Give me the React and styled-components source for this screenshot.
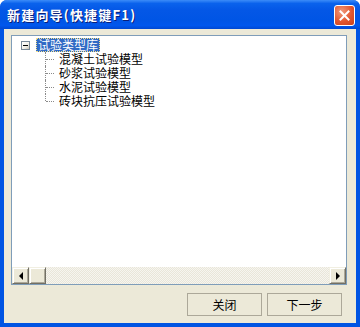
import React from 'react';
import styled, { createGlobalStyle, css } from 'styled-components';

const GlobalStyle = createGlobalStyle`
    html, body {
        margin: 0;
        padding: 0;
        background: #ffffff;
    }
    body {
        font-family: "Noto Sans CJK SC", "Liberation Sans", sans-serif;
        font-size: 12px;
    }
`;

const Window = styled.div`
    width: 360px;
    height: 327px;
    display: flex;
    flex-direction: column;
    box-sizing: border-box;
    overflow: hidden;
    border-radius: 7px 7px 0 0;
    background: #0054e3;
`;

const TitleBar = styled.div`
    height: 29px;
    flex: none;
    display: flex;
    align-items: center;
    justify-content: space-between;
    padding: 0 5px 0 7px;
    box-sizing: border-box;
    background: linear-gradient(
        to bottom,
        #3c8cf8 0%,
        #0a62ec 12%,
        #0457e6 35%,
        #0055e5 70%,
        #0057ed 88%,
        #0048d2 100%
    );
`;

const Title = styled.span`
    color: #ffffff;
    font-weight: bold;
    font-size: 13px;
    letter-spacing: 1.2px;
    text-shadow: 1px 1px 0 #0a1e78;
    line-height: 16px;
`;

const CloseButton = styled.div`
    width: 21px;
    height: 21px;
    box-sizing: border-box;
    border: 1px solid #ffffff;
    border-radius: 3px;
    background: radial-gradient(circle at 35% 30%, #f19a7c 0%, #e2562f 55%, #c8401b 100%);
    display: flex;
    align-items: center;
    justify-content: center;
    margin-top: 1px;
`;

const Body = styled.div`
    flex: 1;
    display: flex;
    flex-direction: column;
    margin: 0 4px 4px 4px;
    padding: 6px 9px 0 7px;
    background: #ece9d8;
`;

const TreeBox = styled.div`
    height: 250px;
    box-sizing: border-box;
    border: 1px solid #7f9db9;
    background: #ffffff;
    display: flex;
    flex-direction: column;
`;

const TreeArea = styled.div`
    flex: 1;
    padding: 2px 0 0 9px;
`;

const Row = styled.div`
    height: 14px;
    display: flex;
    align-items: center;
    line-height: 14px;
    color: #000000;
    white-space: nowrap;
    ${({ indent }) => indent && css`
        padding-left: ${indent}px;
    `}
`;

const Expander = styled.span`
    width: 9px;
    height: 9px;
    box-sizing: border-box;
    border: 1px solid #7a8a99;
    background: linear-gradient(to bottom right, #ffffff 0%, #f2f0e8 60%, #c8c4b4 100%);
    position: relative;
    margin-right: 6px;

    &::after {
        content: '';
        position: absolute;
        left: 1px;
        right: 1px;
        top: 3px;
        height: 1px;
        background: #000000;
    }
`;

const Label = styled.span`
    display: inline-block;
    height: 14px;
    line-height: 14px;
    padding: 0 2px;
    box-sizing: border-box;
    ${({ selected }) => selected && css`
        background: #316ac5;
        color: #ffffff;
        outline: 1px dotted #f5e08a;
        outline-offset: -1px;
    `}
`;

const Connector = styled.span`
    width: 10px;
    height: 14px;
    position: relative;
    flex: none;
    margin-right: 2px;

    &::before {
        content: '';
        position: absolute;
        left: 0;
        top: 0;
        height: ${({ last }) => (last ? '7px' : '14px')};
        border-left: 1px dotted #8a8a8a;
    }

    &::after {
        content: '';
        position: absolute;
        left: 1px;
        top: 7px;
        width: 8px;
        border-top: 1px dotted #8a8a8a;
    }
`;

const ScrollBar = styled.div`
    height: 17px;
    flex: none;
    display: flex;
    background: repeating-conic-gradient(#f6f5f0 0 25%, #e9e6d9 0 50%) 0 0 / 2px 2px;
`;

const ScrollButton = styled.div`
    width: 17px;
    height: 17px;
    box-sizing: border-box;
    background: #ece9d8;
    border-top: 1px solid #f1efe2;
    border-left: 1px solid #f1efe2;
    border-right: 1px solid #716f64;
    border-bottom: 1px solid #716f64;
    box-shadow: inset 1px 1px 0 #ffffff, inset -1px -1px 0 #aca899;
    display: flex;
    align-items: center;
    justify-content: center;
`;

const Track = styled.div`
    flex: 1;
`;

const Arrow = styled.span`
    width: 0;
    height: 0;
    border-top: 4px solid transparent;
    border-bottom: 4px solid transparent;
    ${({ dir }) => dir === 'left'
        ? css`border-right: 4px solid #000000;`
        : css`border-left: 4px solid #000000;`}
`;

const ButtonRow = styled.div`
    display: flex;
    justify-content: flex-end;
    gap: 5px;
    margin-top: 8px;
    padding-right: 5px;
`;

const Button = styled.div`
    width: 75px;
    height: 23px;
    box-sizing: border-box;
    border: 1px solid #aca899;
    background: #ece9d8;
    display: flex;
    align-items: center;
    justify-content: center;
    color: #000000;
    font-size: 12px;
    line-height: 14px;
`;

const models = ['混凝土试验模型', '砂浆试验模型', '水泥试验模型', '砖块抗压试验模型'];

const App = () => {
    return (
        <>
            <GlobalStyle />
            <Window>
                <TitleBar>
                    <Title>新建向导(快捷键F1)</Title>
                    <CloseButton>
                        <svg width="11" height="11" viewBox="0 0 11 11">
                            <path d="M1.5 1.5 L9.5 9.5 M9.5 1.5 L1.5 9.5" stroke="#ffffff" strokeWidth="2" strokeLinecap="square" />
                        </svg>
                    </CloseButton>
                </TitleBar>
                <Body>
                    <TreeBox>
                        <TreeArea>
                            <Row>
                                <Expander />
                                <Label selected>试验类型库</Label>
                            </Row>
                            {models.map((name, i) => (
                                <Row key={name} indent={24}>
                                    <Connector last={i === models.length - 1} />
                                    <Label>{name}</Label>
                                </Row>
                            ))}
                        </TreeArea>
                        <ScrollBar>
                            <ScrollButton><Arrow dir="left" /></ScrollButton>
                            <ScrollButton />
                            <Track />
                            <ScrollButton><Arrow dir="right" /></ScrollButton>
                        </ScrollBar>
                    </TreeBox>
                    <ButtonRow>
                        <Button>关闭</Button>
                        <Button>下一步</Button>
                    </ButtonRow>
                </Body>
            </Window>
        </>
    );
};

export default App;
